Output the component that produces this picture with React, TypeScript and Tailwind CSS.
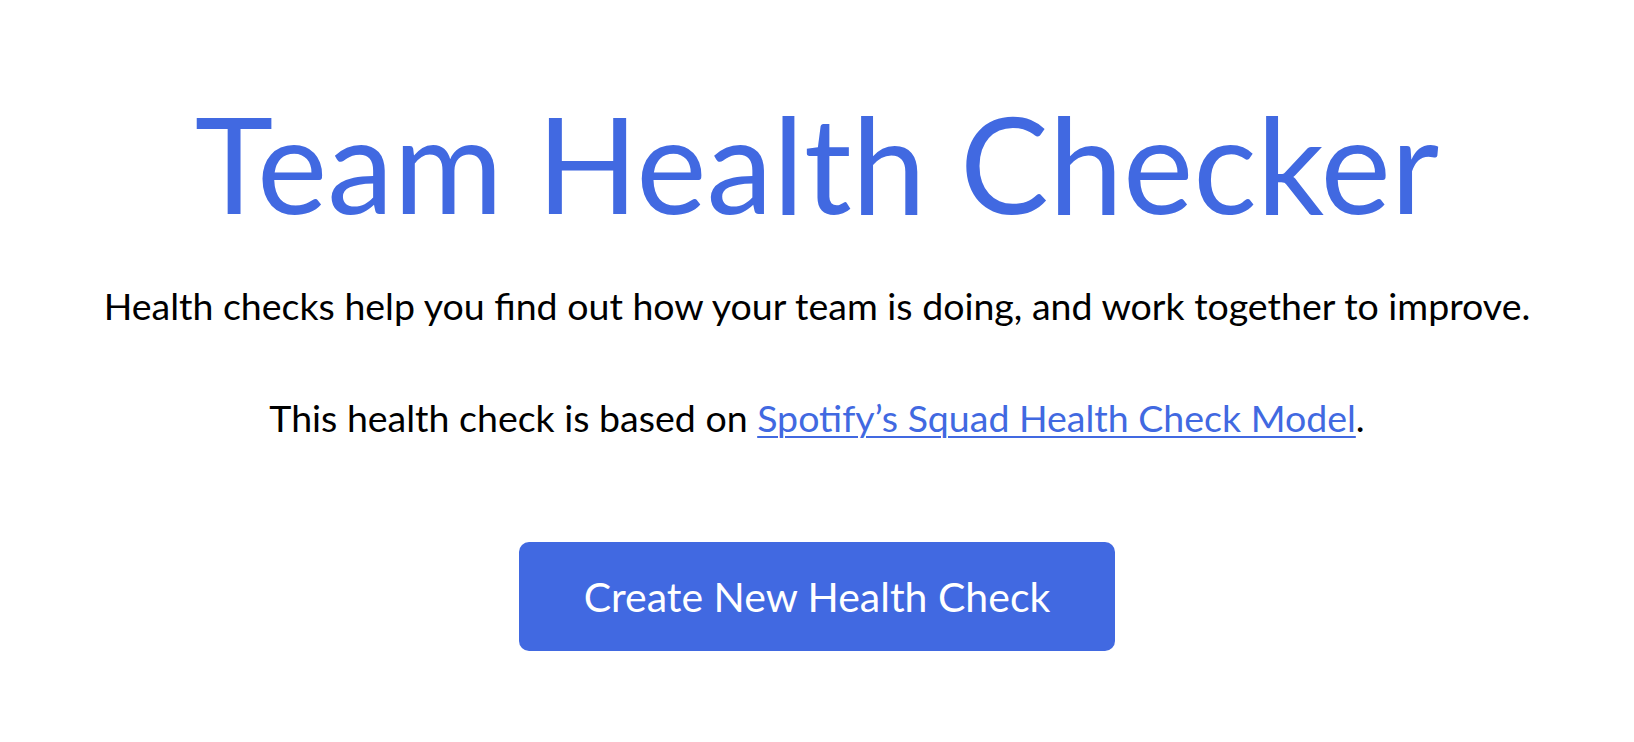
export default function App() {
  return (
    <div className="min-h-screen bg-white flex flex-col items-center" style={{ fontFamily: 'Lato, "Noto Sans", sans-serif' }}>
      <h1 className="mt-[83px] text-[133px] leading-[160px] text-[#4169e1] font-normal whitespace-nowrap">
        Team Health Checker
      </h1>
      <p className="mt-[39px] text-[37.5px] leading-[48px] text-black whitespace-nowrap">
        Health checks help you find out how your team is doing, and work together to improve.
      </p>
      <p className="mt-[64px] text-[37.5px] leading-[48px] text-black whitespace-nowrap">
        This health check is based on{" "}
        <a href="#" className="text-[#4169e1] underline underline-offset-[4px] decoration-2">
          Spotify’s Squad Health Check Model
        </a>
        .
      </p>
      <button className="mt-[100px] w-[596px] h-[109px] rounded-[10px] bg-[#4169e1] text-white text-[41px]">
        Create New Health Check
      </button>
    </div>
  );
}
